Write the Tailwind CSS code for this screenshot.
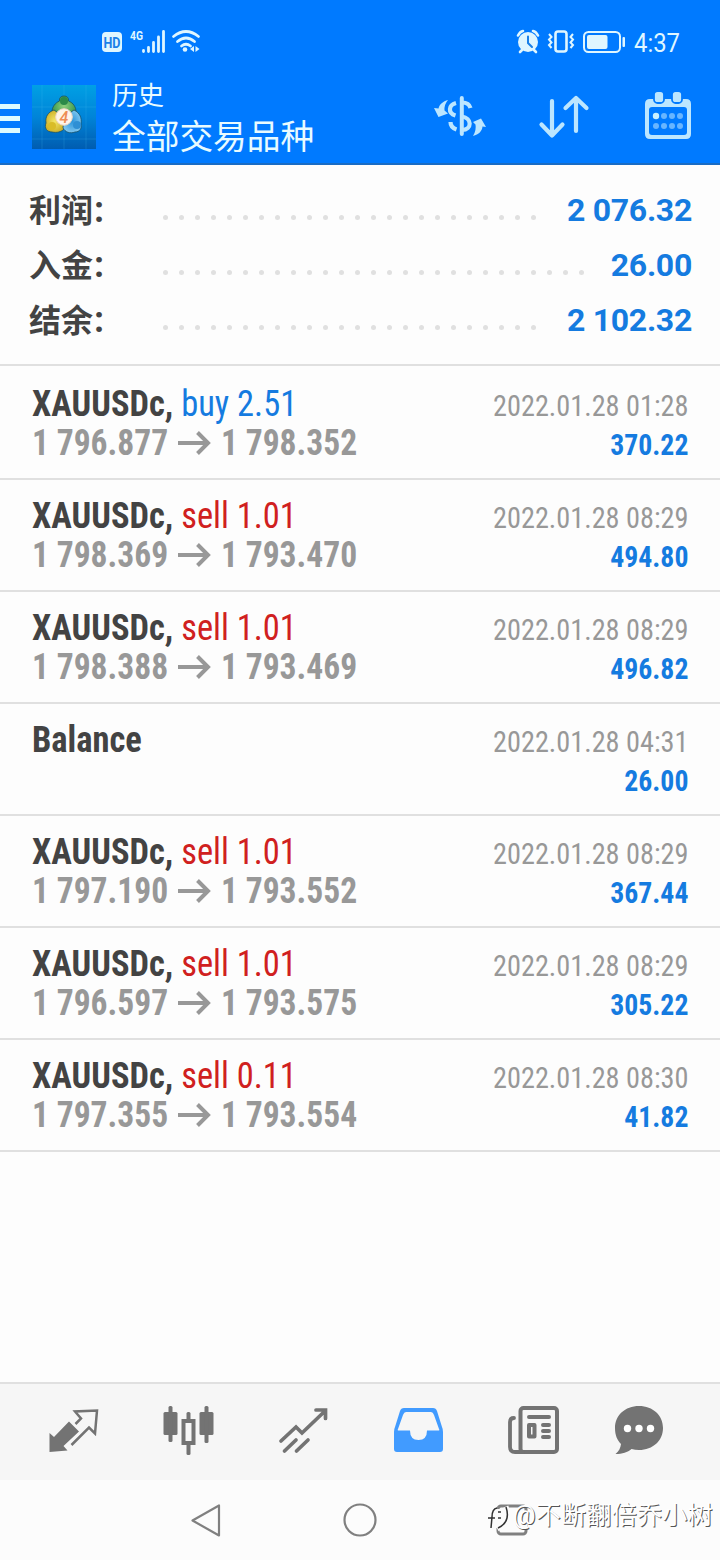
<!DOCTYPE html>
<html lang="zh-CN">
<head>
<meta charset="utf-8">
<meta name="viewport" content="width=device-width">
<title>历史</title>
<script src="https://cdn.jsdelivr.net/npm/@tailwindcss/browser@4"></script>
</head>
<body class="w-[720px] h-[1560px] flex flex-col bg-[#fdfdfd] overflow-hidden font-[Roboto,'Noto_Sans_CJK_SC',sans-serif]">
<header class="h-[165px] shrink-0 bg-[#007aff] border-b-2 border-[#1a6cc4] flex flex-col text-[#e8fbff]">
  <div class="h-[84px] flex items-start">
    <svg class="w-[720px] h-[84px]" viewBox="0 0 720 84" fill="#dff6ff">
      <rect x="102" y="32" width="20" height="20" rx="4"/>
      <text x="112" y="47.500" font-size="15" font-weight="700" text-anchor="middle" fill="#1a80e8" textLength="17" lengthAdjust="spacingAndGlyphs">HD</text>
      <text x="130" y="40" font-size="13.500" font-weight="700" textLength="13" lengthAdjust="spacingAndGlyphs">4G</text>
      <path d="M143.500 50.500v1M148.500 47.500v4M153.500 42.500v9M158.500 37v14.500M163.500 31.500v20" stroke="#dff6ff" stroke-width="2.800" stroke-linecap="round"/>
      <g fill="none" stroke="#dff6ff" stroke-width="2.800" stroke-linecap="round"><path d="M173.500 36.500q12.500-10 25 0M177.500 41.500q8.500-7 17 0M181.500 46q4.500-3.500 9 0"/></g>
      <circle cx="185" cy="49.500" r="2.300"/><path d="M194 46v6l-4-3zM195.500 46v6l4-3z"/>
      <circle cx="528" cy="42" r="10"/>
      <path d="M518 35.500q2-4 5-4.500M538 35.500q-2-4-5-4.500M522 50l-2 2M534 50l2 2" stroke="#dff6ff" stroke-width="2.600" stroke-linecap="round" fill="none"/>
      <path d="M528 36.500v6.500l4 4" stroke="#1a80e8" stroke-width="2" fill="none" stroke-linecap="round"/>
      <rect x="555.500" y="31.500" width="11" height="20" rx="2.500" fill="none" stroke="#dff6ff" stroke-width="2.600"/>
      <path d="M549 34l2.500 3-2.500 2.500 2.500 3-2.500 2.500 2.500 3M573 34l-2.500 3 2.500 2.500-2.500 3 2.500 2.500-2.500 3" stroke="#dff6ff" stroke-width="2" fill="none"/>
      <rect x="584" y="32" width="36" height="20" rx="4.500" fill="none" stroke="#dff6ff" stroke-width="2"/>
      <rect x="587" y="35" width="20.500" height="14" rx="2"/><rect x="622.500" y="37" width="2.500" height="10" rx="1"/>
      <text x="634" y="52" font-size="25" textLength="46" lengthAdjust="spacingAndGlyphs">4:37</text>
    </svg>
  </div>
  <div class="flex h-[79px] items-start">
    <div class="w-5 mt-5 flex flex-col gap-[7px]"><i class="h-[5px] bg-[#dcfaff]"></i><i class="h-[5px] bg-[#dcfaff]"></i><i class="h-[5px] bg-[#dcfaff]"></i></div>
    <svg class="ml-3 mt-px w-16 h-16" viewBox="0 0 64 64">
      <defs>
        <linearGradient id="bg" x1="0" y1="0" x2="0" y2="1"><stop offset="0" stop-color="#00a0e4"/><stop offset=".5" stop-color="#0084d8"/><stop offset="1" stop-color="#005cb0"/></linearGradient>
        <radialGradient id="gr"><stop offset="0" stop-color="#8fd07c"/><stop offset="1" stop-color="#3d9a50"/></radialGradient>
        <radialGradient id="ye"><stop offset="0" stop-color="#f3e668"/><stop offset="1" stop-color="#d0b32c"/></radialGradient>
        <radialGradient id="bl"><stop offset="0" stop-color="#2b94dc"/><stop offset="1" stop-color="#7cc4ee"/></radialGradient>
      </defs>
      <rect width="64" height="64" fill="url(#bg)"/>
      <path d="M0 22h64M0 54h64M10 0v64M54 0v64M32 0v64" stroke="#4bbdf0" stroke-opacity=".25" stroke-width=".8"/>
      <g stroke="#17506a" stroke-width=".8">
        <path d="M32 11c3 0 5 2 4.500 5 5 2 7.500 6 7.500 11l-12 4-12-4c0-5 3-9 7.500-11-.5-3 1.500-5 4.500-5z" fill="url(#gr)"/>
        <path d="M22 25c-6 2-9 7-8 13-2 5 1 9 6 9 5 1 9 0 12-3v-12z" fill="url(#ye)"/>
        <path d="M42 25c6 3 8 8 7 14 1 4-1 8-6 8-5 2-10 0-12-4l1-11z" fill="url(#bl)"/>
      </g>
      <circle cx="32" cy="16" r="4" fill="#2b8a48"/><circle cx="20" cy="41" r="4" fill="#d9bc28"/><circle cx="45" cy="40" r="4" fill="#2f8fd4"/>
      <circle cx="32" cy="32" r="8.300" fill="#fff4e8" stroke="#f0d7c4"/>
      <text x="32" y="38" text-anchor="middle" font-size="16" font-weight="500" font-style="italic" fill="#ee8d55">4</text>
    </svg>
    <div class="ml-4 w-[216px] flex flex-col whitespace-nowrap">
      <div class="text-[26px] leading-[26px] -mt-px">历史</div>
      <div class="text-[33.7px] leading-[40px] mt-[9px]">全部交易品种</div>
    </div>
    <svg class="w-[392px] h-[79px]" viewBox="328 84 392 79" fill="none" stroke="#bce6ff">
      <g transform="translate(92 0)">
        <path d="M369.800 98v36" stroke-width="4" stroke-linecap="round"/>
        <path d="M364 103c-7.500 2-8.500 10-.5 12.500M370 102.500q7 0 8.500 5.500M358.500 122q0 5.500 6 7.500M370 116.500c10 1.500 10.500 13 0 13.500" stroke-width="4.200"/>
        <path d="M356 100c-5 1.500-8.500 4-9.500 8.500l-4.500-.5 4.500 9 9.500-3.500-3.500-3q-.5-6 3.500-10.500z" fill="#bce6ff" stroke="none"/>
        <path d="M381 136c6-1.500 9-5 9.500-9.500l3.500.5-5-8.500-8 3.500 2.500 2.500q1 6-2.500 11.500z" fill="#bce6ff" stroke="none"/>
      </g>
      <path d="M552 101v34M541.500 124.500l10.500 11 10.500-11M576 131v-33M565.500 108l10.500-10 10.500 10" stroke-width="4.200" stroke-linecap="round" stroke-linejoin="round"/>
      <path d="M650 99h36q5 0 5 5v30q0 5-5 5h-36q-5 0-5-5v-30q0-5 5-5zm2 8q-3 0-3 3v22q0 3 3 3h32q3 0 3-3v-22q0-3-3-3z" fill="#bce6ff" stroke="none" fill-rule="evenodd"/>
      <g fill="#bce6ff" stroke="#007aff" stroke-width="1.800"><rect x="654" y="91" width="10" height="12" rx="3.500"/><rect x="672" y="91" width="10" height="12" rx="3.500"/></g>
      <g fill="#68b5ff" stroke="none"><circle cx="656" cy="116" r="3.200" fill="#c9f0ff"/><circle cx="664" cy="116" r="3"/><circle cx="672" cy="116" r="3"/><circle cx="680" cy="116" r="3"/><circle cx="656" cy="126" r="3"/><circle cx="664" cy="126" r="3"/><circle cx="672" cy="126" r="3"/><circle cx="680" cy="126" r="3"/></g>
    </svg>
  </div>
</header>
<section class="h-[201px] shrink-0 border-b-2 border-[#e0e0e0] pt-[18px] pl-7 pr-7 flex flex-col font-bold text-[32px]" id="summary"></section>
<main class="flex-1 flex flex-col" id="deals"></main>
<nav class="h-[98px] shrink-0 border-t-2 border-[#e0e0e0] bg-[#f6f6f6]">
  <svg class="w-[720px] h-24" viewBox="0 1384 720 96" fill="none" stroke="#737373">
    <path d="M49.500 1433l4.500 4 15-15.500 10 10-15.500 14.500 4 4.500-18 1.500z" fill="#737373" stroke="none"/>
    <path d="M75.500 1424l5.500-5.500-6-7 22-1-2 23-6-6-17.500 17.500" stroke-width="2.500"/>
    <g fill="#737373" stroke="none"><rect x="163.500" y="1412" width="14" height="23" rx="1.500"/><rect x="168.500" y="1406" width="4" height="36" rx="1.500"/><rect x="199.500" y="1412" width="14" height="23" rx="1.500"/><rect x="204.500" y="1406" width="4" height="37" rx="1.500"/><rect x="186.500" y="1412" width="4" height="8" rx="1.500"/><rect x="186.500" y="1443" width="4" height="12" rx="1.500"/></g>
    <rect x="183.500" y="1421" width="10" height="22" stroke-width="4"/>
    <path d="M281 1441l15-14 6 6 23-22M316 1410h9.500v8.500M284.500 1451l11.500-11M296.500 1451l11.500-11" stroke-width="3.700" stroke-linecap="round"/>
    <path d="M404 1408h29q3 0 4 3l5 16q1 2 1 5v17q0 3-3 3h-43q-3 0-3-3v-17q0-3 1-5l5-16q1-3 4-3zm2 4q-2 0-3 3l-5 14q-1 1.500 1 1.500h11q0 9.500 8.500 9.500t8.500-9.500h11q2 0 1-1.500l-5-14q-1-3-3-3z" fill="#419bff" stroke="none" fill-rule="evenodd"/>
    <rect x="520.500" y="1408" width="36.500" height="44" rx="3" stroke-width="4"/>
    <path d="M514 1418q-4 0-4 4v25q0 5 5 5h8" stroke-width="3.800" stroke-linecap="round"/>
    <path d="M529 1417h20M543 1425h6M543 1431h6M543 1437h6" stroke-width="4" stroke-linecap="round"/>
    <rect x="529" y="1425" width="5.500" height="11.500" stroke-width="4" stroke-linejoin="round"/>
    <path d="M639 1406c14 0 24 9.500 24 22s-10 22-24 22q-4 0-7.500-1c-4 3.500-9 5-16 5 3.500-3 5-6 5.500-10-4-4-6-9-6-16 0-12.500 10-22 24-22z" fill="#737373" stroke="none"/>
    <g fill="#fff" stroke="none"><circle cx="627.500" cy="1428.500" r="3.700"/><circle cx="639" cy="1428.500" r="3.700"/><circle cx="650.500" cy="1428.500" r="3.700"/></g>
  </svg>
</nav>
<footer class="h-20 shrink-0 bg-[#fcfcfc] relative">
  <svg class="w-[720px] h-20" viewBox="0 1480 720 80" fill="none" stroke="#808080">
    <path d="M192.500 1520.500l26.500-15v30z" stroke-width="2.200" stroke-linejoin="round"/>
    <circle cx="360" cy="1520" r="15.500" stroke-width="2.200"/>
    <rect x="498" y="1506" width="28" height="28" rx="3" stroke-width="3"/>
    <path d="M495 1510q-6 4-6 17M489 1517h8M498 1509v19M505 1507q6 14-8 21M524 1511v17" stroke="#fcfcfc" stroke-width="7"/>
    <path d="M497 1508q-5 1-5 9l-1 11M488 1518h7M498 1512h3M498 1518h3M506 1507q5 15-8 21" stroke="#333" stroke-width="1.500"/>
  </svg>
  <div class="absolute left-[513px] top-[20px] text-[25px] tracking-[0.3px] leading-[32px] text-white whitespace-nowrap [text-shadow:1px_1px_0_#555] w-[205px]">@不断翻倍乔小树</div>
</footer>
<script>
const dots = n => `<span class="flex gap-[11px] ml-[58px] mt-[13px]">${'<i class="size-[5px] rounded-full bg-[#e0e0e0]"></i>'.repeat(n)}</span>`;
document.getElementById('summary').innerHTML = [['利润','2 076.32',24],['入金','26.00',27],['结余','2 102.32',24]].map(([k,v,n]) =>
`<div class="h-[55px] flex items-center"><span class="ml-px w-[76px] text-[32px] text-[#434343] whitespace-nowrap">${k}<span class="ml-px text-[36px] leading-8">:</span></span>${dots(n)}<span class="ml-auto text-[32px] tracking-[-0.3px] text-[#157be0] -mt-px">${v}</span></div>`).join('');
const S='XAUUSDc,';
const rows=[
[S,'buy 2.51','1 796.877','1 798.352','2022.01.28 01:28','370.22'],
[S,'sell 1.01','1 798.369','1 793.470','2022.01.28 08:29','494.80'],
[S,'sell 1.01','1 798.388','1 793.469','2022.01.28 08:29','496.82'],
['Balance','','','','2022.01.28 04:31','26.00'],
[S,'sell 1.01','1 797.190','1 793.552','2022.01.28 08:29','367.44'],
[S,'sell 1.01','1 796.597','1 793.575','2022.01.28 08:29','305.22'],
[S,'sell 0.11','1 797.355','1 793.554','2022.01.28 08:30','41.82']];
const arrow='<svg class="w-[33px] h-7 mx-[10px] -mt-px" viewBox="0 0 33 28" fill="none" stroke="#989898" stroke-width="4"><path d="M0 14h30M19.500 3.500l10.500 10.500-10.500 10.500"/></svg>';
document.getElementById('deals').innerHTML = rows.map((r,i)=>
`<div class="${i?'h-[112px] pt-[17px]':'h-[114px] pt-[19px]'} px-8 border-b-2 border-[#e0e0e0] flex justify-between font-['Roboto_Condensed',Roboto,sans-serif] font-stretch-75% whitespace-nowrap">
<div class="text-[36px] leading-[39px] font-bold"><div class="text-[#434343] origin-left scale-x-[0.957]">${r[0]} <span class="font-normal ${r[1][0]==='b'?'text-[#157be0]':'text-[#d02020]'}">${r[1]}</span></div>
${r[2]?`<div class="flex items-center text-[#989898]"><span class="w-[136px] origin-left scale-x-[0.932]">${r[2]}</span>${arrow}<span class="w-[136px] origin-left scale-x-[0.932]">${r[3]}</span></div>`:''}</div>
<div class="text-right pt-px"><div class="text-[30px] leading-[39px] origin-right scale-x-[0.942] text-[#989898]">${r[4]}</div><div class="text-[30px] leading-[39px] origin-right scale-x-[0.925] font-bold text-[#157be0]">${r[5]}</div></div></div>`).join('');
</script>
</body>
</html>
